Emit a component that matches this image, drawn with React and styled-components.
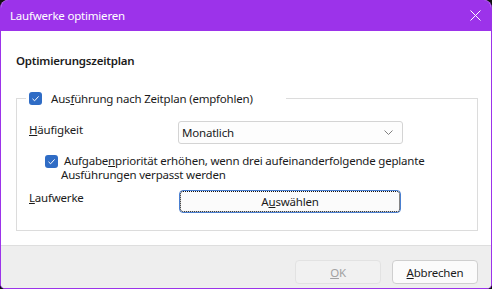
import React from "react";
import styled, { createGlobalStyle } from "styled-components";

const Global = createGlobalStyle`
  html, body { margin: 0; padding: 0; background: #111; }
  body { font-family: "Noto Sans", "Open Sans", sans-serif; font-size: 11.5px; letter-spacing: -0.2px; color: #1b1b1b; }
  #root { width: 492px; height: 289px; }
`;

const Window = styled.div`
  box-sizing: border-box;
  width: 492px;
  height: 289px;
  border: 1px solid #9c33ea;
  border-top: none;
  border-radius: 8px 8px 5px 5px;
  overflow: hidden;
  display: flex;
  flex-direction: column;
  background: #fff;
`;

const TitleBar = styled.div`
  height: 31px;
  margin: 0 -1px;
  background: #9c33ea;
  color: #fff;
  display: flex;
  align-items: center;
  justify-content: space-between;
  padding: 0 11px 1px 10px;
  box-sizing: border-box;
`;

const Content = styled.div`
  flex: 1;
  display: flex;
  flex-direction: column;
  padding: 22px 13px 0 15px;
`;

const Heading = styled.div`
  font-weight: 600;
  line-height: 16px;
  height: 16px;
`;

const Group = styled.fieldset`
  margin: 22px 0 0 0;
  padding: 0 0 17px 0;
  border: 1px solid #dcdcdc;
  min-width: 0;
`;

const Legend = styled.legend`
  padding: 0 0 0 3px;
  margin-left: 9px;
  width: 257px;
  height: 15px;
  display: flex;
  align-items: center;
  gap: 9px;
`;

const GroupBody = styled.div`
  display: flex;
  flex-direction: column;
  padding-left: 12px;
`;

const Box = styled.span`
  width: 13px;
  height: 13px;
  flex: none;
  border-radius: 3px;
  background: #2f6cc5;
  display: inline-flex;
  align-items: center;
  justify-content: center;
  margin-top: ${(p) => p.$top || 0}px;
`;

const Row = styled.div`
  display: flex;
  align-items: flex-start;
  margin-top: ${(p) => p.$mt}px;
`;

const FieldLabel = styled.div`
  width: 149px;
  flex: none;
  line-height: 16px;
  padding-top: ${(p) => p.$pt || 0}px;
`;

const Select = styled.div`
  box-sizing: border-box;
  width: 225px;
  height: 23px;
  border: 1px solid #d4d4d4;
  border-radius: 3px;
  background: #fdfdfd;
  display: flex;
  align-items: center;
  justify-content: space-between;
  padding: 0 9px 0 3px;
`;

const CheckRow = styled.div`
  display: flex;
  align-items: flex-start;
  gap: 3px;
  margin: 10px 0 0 16px;
`;

const CheckText = styled.div`
  display: flex;
  flex-direction: column;
`;

const TextLine = styled.span`
  line-height: 14px;
  white-space: nowrap;
  padding-left: ${(p) => p.$indent || 0}px;
`;

const ChooseButton = styled.button`
  box-sizing: border-box;
  width: 222px;
  height: 23px;
  margin-left: 1px;
  border: 1px solid #4a7fd0;
  border-radius: 4px;
  background: #fbfbfb;
  font: inherit;
  letter-spacing: inherit;
  color: #1b1b1b;
  outline: 1px dotted #111;
  outline-offset: -2px;
  padding: 0;
`;

const Footer = styled.div`
  height: 43px;
  background: #eeeeee;
  border-top: 1px solid #dedede;
  display: flex;
  justify-content: flex-end;
  align-items: flex-start;
  gap: 11px;
  padding: 14px 13px 0 0;
  box-sizing: border-box;
`;

const DialogButton = styled.button`
  box-sizing: border-box;
  width: 86px;
  height: 24px;
  border-radius: 4px;
  font: inherit;
  letter-spacing: inherit;
  padding: 0;
  border: 1px solid ${(p) => (p.disabled ? "#e2e2e2" : "#cfcfcf")};
  background: ${(p) => (p.disabled ? "#f1f1f1" : "#fbfbfb")};
  color: ${(p) => (p.disabled ? "#a2a2a2" : "#1b1b1b")};
`;

const Check = () => (
  <svg width="9" height="9" viewBox="0 0 9 9">
    <path d="M1.5 4.8 L3.6 6.8 L7.6 2.4" fill="none" stroke="#fff" strokeWidth="1" />
  </svg>
);

export default function App() {
  return (
    <>
      <Global />
      <Window>
        <TitleBar>
          <span>Laufwerke optimieren</span>
          <svg width="11" height="11" viewBox="0 0 11 11">
            <path d="M0.5 0.5 L10.5 10.5 M10.5 0.5 L0.5 10.5" stroke="#fff" strokeWidth="1" />
          </svg>
        </TitleBar>
        <Content>
          <Heading>Optimierungszeitplan</Heading>
          <Group>
            <Legend>
              <Box><Check /></Box>
              <span>Aus<u>f</u>ührung nach Zeitplan (empfohlen)</span>
            </Legend>
            <GroupBody>
              <Row $mt={15}>
                <FieldLabel $pt={1}><u>H</u>äufigkeit</FieldLabel>
                <Select>
                  <span>Monatlich</span>
                  <svg width="9" height="5" viewBox="0 0 9 5">
                    <path d="M0.5 0.5 L4.5 4.5 L8.5 0.5" fill="none" stroke="#808080" strokeWidth="1" />
                  </svg>
                </Select>
              </Row>
              <CheckRow>
                <Box $top={1}><Check /></Box>
                <CheckText>
                  <TextLine $indent={3}>
                    Aufgabe<u>n</u>priorität erhöhen, wenn drei aufeinanderfolgende geplante
                  </TextLine>
                  <TextLine>Ausführungen verpasst werden</TextLine>
                </CheckText>
              </CheckRow>
              <Row $mt={8}>
                <FieldLabel><u>L</u>aufwerke</FieldLabel>
                <ChooseButton>A<u>u</u>swählen</ChooseButton>
              </Row>
            </GroupBody>
          </Group>
        </Content>
        <Footer>
          <DialogButton disabled><u>O</u>K</DialogButton>
          <DialogButton><u>A</u>bbrechen</DialogButton>
        </Footer>
      </Window>
    </>
  );
}
